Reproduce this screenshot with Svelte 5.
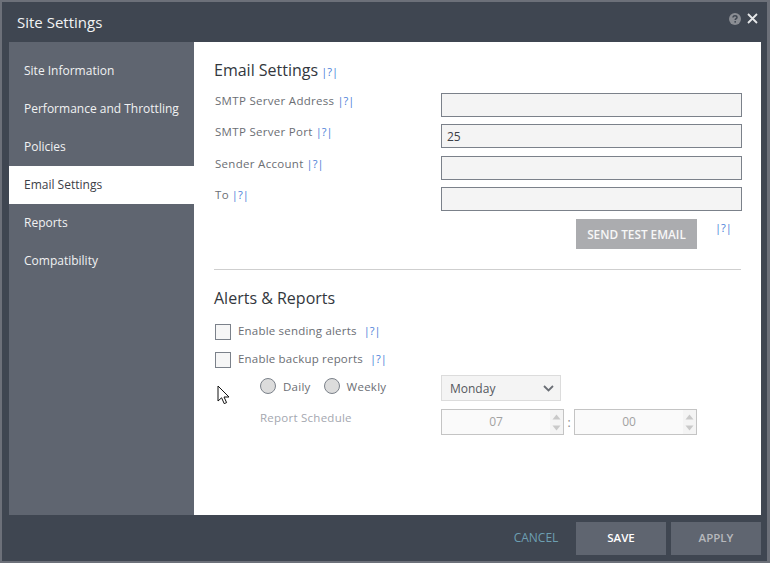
<script lang="ts">
	const navItems = ['Site Information', 'Performance and Throttling', 'Policies', 'Email Settings', 'Reports', 'Compatibility'];
	let active = $state('Email Settings');

	const fields = [
		{ label: 'SMTP Server Address', value: '' },
		{ label: 'SMTP Server Port', value: '25' },
		{ label: 'Sender Account', value: '' },
		{ label: 'To', value: '' }
	];
</script>

{#snippet help()}
	<span class="help">|?|</span>
{/snippet}

{#snippet spinner(value: string)}
	<div class="spinner">
		<span class="spin-value">{value}</span>
		<div class="spin-arrows">
			<svg width="9" height="6" viewBox="0 0 9 6"><path d="M4.5 0.5 L8.5 5.5 H0.5 Z" fill="#c9c9c9" /></svg>
			<svg width="9" height="6" viewBox="0 0 9 6"><path d="M4.5 5.5 L8.5 0.5 H0.5 Z" fill="#c9c9c9" /></svg>
		</div>
	</div>
{/snippet}

<div class="dialog">
	<header class="titlebar">
		<h1>Site Settings</h1>
		<div class="title-icons">
			<svg width="12" height="12" viewBox="0 0 12 12">
				<circle cx="6" cy="6" r="6" fill="#8a8d93" />
				<path d="M4 4.6 C4 3.3 5 2.7 6 2.7 C7.1 2.7 8 3.4 8 4.4 C8 5.6 6.2 5.7 6.2 7.1" fill="none" stroke="#3f4651" stroke-width="1.5" />
				<rect x="5.4" y="8.1" width="1.6" height="1.5" fill="#3f4651" />
			</svg>
			<svg width="11" height="11" viewBox="0 0 11 11">
				<path d="M1 1 L10 10 M10 1 L1 10" stroke="#e6e7e9" stroke-width="1.8" fill="none" />
			</svg>
		</div>
	</header>

	<div class="body">
		<nav class="sidebar">
			{#each navItems as item}
				<button class="nav-item" class:active={item === active} onclick={() => (active = item)}>{item}</button>
			{/each}
		</nav>

		<main class="content">
			<h2 class="email-title"><span>Email Settings</span>{@render help()}</h2>

			<div class="fields">
				{#each fields as field}
					<div class="field">
						<div class="field-label"><span>{field.label}</span>{@render help()}</div>
						<input class="text-input" type="text" value={field.value} />
					</div>
				{/each}
			</div>

			<div class="test-row">
				<button class="test-btn">SEND TEST EMAIL</button>
				{@render help()}
			</div>

			<hr />

			<h2 class="alerts-title">Alerts &amp; Reports</h2>

			<div class="check-row"><span class="check"></span><span>Enable sending alerts</span>{@render help()}</div>
			<div class="check-row"><span class="check"></span><span>Enable backup reports</span>{@render help()}</div>

			<div class="schedule">
				<div class="schedule-left">
					<div class="radios">
						<span class="radio"></span><span class="radio-label">Daily</span>
						<span class="radio"></span><span class="radio-label">Weekly</span>
					</div>
					<div class="schedule-label">Report Schedule</div>
				</div>
				<div class="schedule-right">
					<div class="select">
						<span>Monday</span>
						<svg width="11" height="7" viewBox="0 0 11 7"><path d="M1 1 L5.5 5.4 L10 1" fill="none" stroke="#6a6e75" stroke-width="1.8" /></svg>
					</div>
					<div class="time">
						{@render spinner('07')}
						<span class="colon">:</span>
						{@render spinner('00')}
					</div>
				</div>
			</div>
		</main>
	</div>

	<footer class="footer">
		<button class="cancel">CANCEL</button>
		<button class="action save">SAVE</button>
		<button class="action apply">APPLY</button>
	</footer>

	<svg class="cursor" width="14" height="20" viewBox="0 0 14 20">
		<path d="M1 1 V16 L4.6 12.8 L7.2 18.6 L9.6 17.6 L7 12 H12 Z" fill="#fff" stroke="#111" stroke-width="1" />
	</svg>
</div>

<style>
	:global(body) {
		margin: 0;
		background: #3f4651;
	}
	.dialog {
		position: relative;
		box-sizing: border-box;
		width: 770px;
		height: 563px;
		display: flex;
		flex-direction: column;
		background: #3f4651;
		border: 2px solid #6c7079;
		border-right-width: 3px;
		font-family: 'Open Sans', sans-serif;
		color: #6b6e74;
	}
	.titlebar {
		height: 40px;
		flex: none;
		display: flex;
		align-items: center;
		justify-content: space-between;
		padding: 0 9px 0 15px;
	}
	h1 {
		margin: 0;
		font-size: 15px;
		font-weight: 400;
		color: #f2f3f4;
	}
	.title-icons {
		display: flex;
		align-items: center;
		gap: 6px;
		margin-bottom: 7px;
	}
	.body {
		flex: none;
		height: 473px;
		margin: 0 0 0 7px;
		width: 752px;
		display: flex;
		background: #fff;
	}
	.sidebar {
		width: 185px;
		flex: none;
		box-sizing: border-box;
		padding-top: 10px;
		background: #5f6570;
		display: flex;
		flex-direction: column;
	}
	.nav-item {
		height: 38px;
		padding: 0 0 2px 15px;
		border: 0;
		background: none;
		text-align: left;
		font: 500 12px 'Open Sans', sans-serif;
		color: #f1f2f3;
	}
	.nav-item.active {
		background: #fff;
		color: #3c4047;
		font-weight: 400;
	}
	.content {
		flex: 1;
		box-sizing: border-box;
		padding: 16px 20px 0 20px;
	}
	h2 {
		margin: 0;
		height: 25px;
		line-height: 25px;
		font-size: 16px;
		font-weight: 400;
		color: #33373d;
	}
	.email-title {
		display: flex;
		align-items: baseline;
		gap: 3px;
	}
	.help {
		font-size: 11px;
		letter-spacing: 0;
		color: #4a80d8;
		font-weight: 400;
	}
	.fields {
		margin-top: 9.75px;
		margin-left: 1px;
	}
	.field {
		display: flex;
		height: 31.5px;
		font-size: 11.5px;
		letter-spacing: 0.3px;
	}
	.field-label {
		width: 226px;
		flex: none;
		height: 24px;
		line-height: 16px;
		display: flex;
		align-items: baseline;
		gap: 3px;
	}
	.text-input {
		box-sizing: border-box;
		width: 301px;
		height: 24px;
		padding: 0 5px;
		border: 1px solid #7b818a;
		border-radius: 0;
		outline: 0;
		background: #f4f4f4;
		font: 400 12px 'Open Sans', sans-serif;
		color: #3c4047;
	}
	.test-row {
		margin-top: 0.25px;
		display: flex;
		align-items: flex-start;
		margin-left: 362px;
		gap: 18px;
	}
	.test-btn {
		width: 121px;
		height: 30px;
		padding: 0;
		border: 0;
		background: #abacaf;
		color: #f7f7f7;
		font: 600 11.8px 'Open Sans', sans-serif;
	}
	.test-row .help {
		line-height: 16px;
		margin-top: 1px;
	}
	hr {
		margin: 20px 0 0 0;
		width: 527px;
		border: 0;
		border-top: 1px solid #cfcfcf;
	}
	.alerts-title {
		margin-top: 16px;
	}
	.check-row {
		display: flex;
		align-items: center;
		height: 28px;
		margin-left: 1px;
		font-size: 11.5px;
		letter-spacing: 0.2px;
		gap: 7px;
	}
	.alerts-title + .check-row {
		margin-top: 5px;
	}
	.check {
		box-sizing: border-box;
		width: 16px;
		height: 16px;
		margin-top: 4px;
		border: 1px solid #7b818a;
		background: #f6f6f6;
	}
	.schedule {
		display: flex;
		margin-top: 2px;
	}
	.schedule-left {
		width: 227px;
		flex: none;
		padding: 4px 0 0 46px;
		box-sizing: border-box;
	}
	.schedule-right {
		padding-top: 1px;
	}
	.radios {
		display: flex;
		align-items: center;
		height: 16px;
		font-size: 11.5px;
	}
	.radio {
		box-sizing: border-box;
		width: 16px;
		height: 16px;
		border-radius: 50%;
		border: 1px solid #7b818a;
		background: #dcdcdc;
	}
	.radio-label {
		margin: 0 7px;
		letter-spacing: 0.25px;
	}
	.radio-label:nth-of-type(2) {
		margin-right: 13px;
	}
	.schedule-label {
		margin-top: 16px;
		font-size: 11.5px;
		letter-spacing: 0.25px;
		color: #a4a7b0;
	}
	.select {
		box-sizing: border-box;
		width: 120px;
		height: 26px;
		display: flex;
		align-items: center;
		justify-content: space-between;
		padding: 0 6px 0 8px;
		border: 1px solid #dcdcdc;
		background: #f4f4f4;
		font-size: 12px;
		color: #55585e;
	}
	.time {
		margin-top: 8px;
		display: flex;
		align-items: center;
	}
	.spinner {
		box-sizing: border-box;
		width: 123px;
		height: 26px;
		display: flex;
		border: 1px solid #c4c4c4;
		background: #fafafa;
	}
	.spin-value {
		flex: 1;
		text-align: center;
		line-height: 24px;
		font-size: 12px;
		color: #a2a2a2;
	}
	.spin-arrows {
		width: 13px;
		flex: none;
		display: flex;
		flex-direction: column;
		align-items: center;
		justify-content: center;
		gap: 5px;
		background: #f4f4f4;
	}
	.colon {
		width: 10px;
		text-align: center;
		font-size: 12px;
		color: #8a8a8a;
	}
	.footer {
		flex: 1;
		display: flex;
		justify-content: flex-end;
		align-items: flex-start;
		gap: 5px;
		padding: 5px 6px 0 0;
		margin-top: 2px;
	}
	.footer button {
		height: 33px;
		padding: 0 0 2px;
		border: 0;
		font: 600 11.5px 'Open Sans', sans-serif;
	}
	.footer .cancel {
		width: 62px;
		margin-right: 4px;
		background: none;
		color: #6d9fb1;
		font-weight: 400;
		font-size: 12px;
	}
	.action {
		width: 90px;
		background: #5f6570;
	}
	.save {
		color: #fff;
	}
	.apply {
		color: #b6b8bc;
	}
	.cursor {
		position: absolute;
		left: 215px;
		top: 383px;
	}
</style>
